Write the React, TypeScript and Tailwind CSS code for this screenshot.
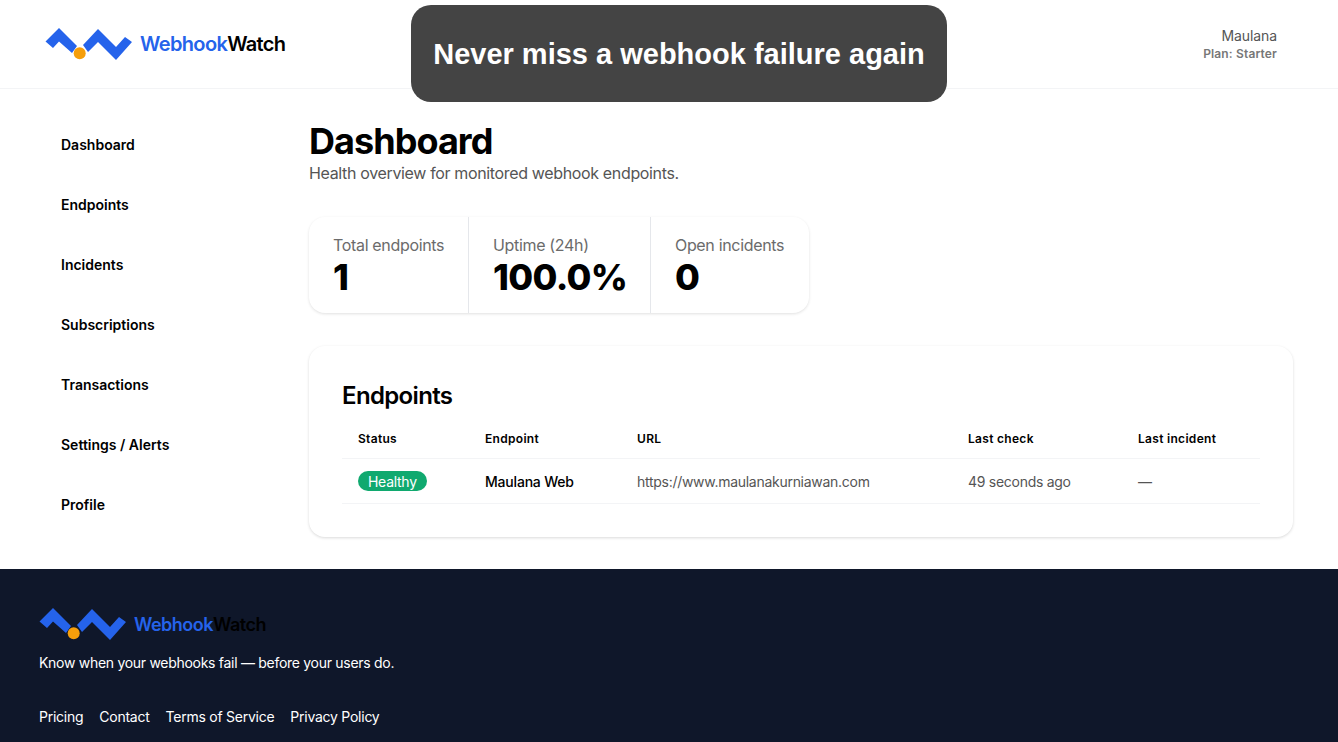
import React from "react";

function Logo({ className }: { className: string }) {
  return (
    <svg viewBox="0 0 87 33" className={className}>
      <path d="M0.5 13.5 L14 0 L32 18 L27 25 L14 13.5 L8 20 Z" fill="#2563eb" />
      <path d="M38 17 L53 1 L71 19 L80 9 L87 14 L71 32 L53 14 L43 24 Z" fill="#2563eb" />
      <circle cx="34.7" cy="25.3" r="6" fill="#f59e0b" />
    </svg>
  );
}

const nav = ["Dashboard", "Endpoints", "Incidents", "Subscriptions", "Transactions", "Settings / Alerts", "Profile"];

function Stat({ label, value, className }: { label: string; value: string; className: string }) {
  return (
    <div className={className}>
      <div className="text-[16px] leading-[24px] tracking-[-0.33px] text-[#6b6b6b]">{label}</div>
      <div className="text-[36px] leading-[40px] font-extrabold tracking-[-0.65px] text-black">{value}</div>
    </div>
  );
}

export default function App() {
  return (
    <div className="relative w-full bg-white font-['Inter',sans-serif]">
      <header className="h-[89px] border-b border-[#f3f4f6] flex items-center justify-between pl-[45px] pr-[61px]">
        <div className="flex items-center gap-[8px]">
          <Logo className="w-[87px] h-[33px]" />
          <div className="text-[20px] leading-[28px] font-semibold tracking-[-0.65px] text-black">
            <span className="text-[#2563eb]">Webhook</span>Watch
          </div>
        </div>
        <div className="text-right">
          <div className="text-[14px] leading-[20px] tracking-[-0.1px] text-[#555555]">Maulana</div>
          <div className="text-[12px] leading-[16px] font-semibold tracking-[0.15px] text-[#777777]">Plan: Starter</div>
        </div>
      </header>
      <div className="absolute left-[411px] top-[5px] w-[536px] h-[97px] rounded-[20px] bg-[#444444] flex items-center justify-center pt-[2px] font-['Liberation_Sans',sans-serif] font-bold text-[29px] text-white">
        Never miss a webhook failure again
      </div>
      <main className="flex h-[480px]">
        <nav className="w-[309px] shrink-0 pl-[61px] pt-[25px] flex flex-col">
          {nav.map((n) => (
            <div key={n} className="h-[60px] flex items-center text-[14px] font-semibold text-black">{n}</div>
          ))}
        </nav>
        <div className="w-[984px] pt-[32px]">
          <h1 className="text-[36px] leading-[40px] font-bold tracking-[-0.95px] text-black">Dashboard</h1>
          <p className="text-[16px] leading-[24px] tracking-[-0.35px] text-[#555555]">Health overview for monitored webhook endpoints.</p>
          <div className="mt-[32px] w-[500px] h-[96px] flex rounded-[16px] bg-white shadow-[0_1px_3px_rgba(0,0,0,0.12)]">
            <Stat label="Total endpoints" value="1" className="w-[160px] pl-[24px] pt-[16px] border-r border-[#e5e7eb]" />
            <Stat label="Uptime (24h)" value="100.0%" className="w-[182px] pl-[24px] pt-[16px] border-r border-[#e5e7eb]" />
            <Stat label="Open incidents" value="0" className="flex-1 pl-[24px] pt-[16px]" />
          </div>
          <section className="mt-[33px] h-[191px] rounded-[16px] bg-white shadow-[0_1px_3px_rgba(0,0,0,0.15)] px-[33px] pt-[34px]">
            <h2 className="text-[24px] leading-[32px] font-semibold tracking-[-0.65px] text-black">Endpoints</h2>
            <div className="mt-[7px] h-[40px] grid grid-cols-[143px_152px_331px_170px_1fr] items-center border-b border-[#f3f4f6] text-[12px] font-semibold tracking-[0.3px] text-black">
              <div className="pl-[16px]">Status</div>
              <div>Endpoint</div>
              <div>URL</div>
              <div>Last check</div>
              <div>Last incident</div>
            </div>
            <div className="h-[45px] grid grid-cols-[143px_152px_331px_170px_1fr] items-center border-b border-[#f3f4f6] text-[14px] tracking-[-0.28px] text-[#555555]">
              <div className="pl-[16px]">
                <span className="inline-flex h-[20px] items-center rounded-full bg-[#10a96f] px-[10px] text-white">Healthy</span>
              </div>
              <div className="font-medium tracking-[-0.2px] text-black">Maulana Web</div>
              <div>https://www.maulanakurniawan.com</div>
              <div>49 seconds ago</div>
              <div>—</div>
            </div>
          </section>
        </div>
      </main>
      <footer className="h-[173px] bg-[#0f172a] pl-[39px] pt-[39px]">
        <div className="flex items-center gap-[8px]">
          <Logo className="w-[87px] h-[33px]" />
          <div className="text-[18px] leading-[28px] font-semibold tracking-[-0.5px] text-black">
            <span className="text-[#2563eb]">Webhook</span>Watch
          </div>
        </div>
        <p className="mt-[12px] text-[14px] leading-[20px] tracking-[-0.29px] text-white">Know when your webhooks fail — before your users do.</p>
        <div className="mt-[34px] flex gap-[16px] text-[14px] leading-[20px] tracking-[-0.25px] text-white">
          <span>Pricing</span>
          <span>Contact</span>
          <span>Terms of Service</span>
          <span>Privacy Policy</span>
        </div>
      </footer>
    </div>
  );
}
